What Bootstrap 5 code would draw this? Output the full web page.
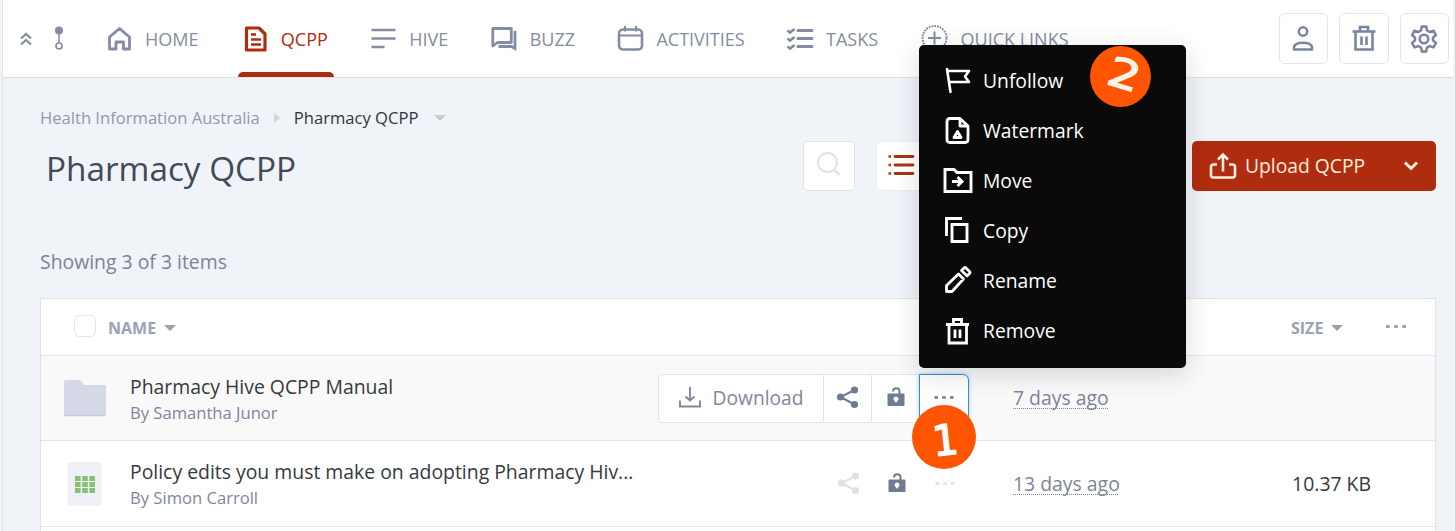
<!DOCTYPE html>
<html lang="en">
<head>
  <meta charset="UTF-8" />
  <meta name="viewport" content="width=device-width, initial-scale=1" />
  <title>Pharmacy QCPP</title>
  <link href="https://cdn.jsdelivr.net/npm/bootstrap@5.3.2/dist/css/bootstrap.min.css" rel="stylesheet" />
  <style>
    body {
      font-family: "Open Sans", "Noto Sans", sans-serif;
      font-size: 19.4px;
      line-height: 26px;
      color: #343a40;
      background: #f0f3f8;
      overflow: hidden;
      height: 531px;
    }
    svg { display: block; flex: none; fill: none; stroke: currentColor; stroke-width: 2; overflow: visible; }
    .page-frame { height: 531px; margin-right: 2px; border-left: 1px solid #dfe3ea; margin-left: 2px; }

    /* top bar */
    .top-bar { height: 78px; background: #fff; border-bottom: 1px solid #dde1e7; color: #848ca3; padding: 0 4px 0 16px; }
    .path-dots { margin-left: 20px; }
    .main-tabs { gap: 30.4px; font-size: 18px; margin-left: 36px; }
    .main-tabs .nav-link { position: relative; height: 77px; padding: 0 6px; color: inherit; gap: 13px; white-space: nowrap; }
    .main-tabs .home { padding-right: 9px; }
    .main-tabs .nav-link.active { color: #b02c0e; }
    .main-tabs .nav-link.active::after {
      content: ""; position: absolute; left: 0; right: 0; bottom: 0; height: 5px;
      background: #ac2c12; border-radius: 5px 5px 0 0;
    }
    .tools { gap: 11px; }
    .tool-btn { width: 49.5px; height: 51px; padding: 0; color: #7a84a0; background: #fff; border: 1px solid #e2e5ec; border-radius: 6px; }

    /* heading */
    .content-area { padding: 0 17px 0 37px; }
    .crumbs { height: 26px; margin-top: 27px; font-size: 16.6px; color: #9399ae; }
    .crumbs .current { color: #30363d; }
    .tri { width: 0; height: 0; border: 5px solid transparent; }
    .tri-right { border-left: 6px solid #d0d4de; border-right: 0; margin: 0 14px; }
    .tri-down { border-top: 6px solid #9aa1ad; border-bottom: 0; border-left-width: 6px; border-right-width: 6px; }
    .title-row { height: 50px; margin-top: 10px; }
    .title-row h1 { font-size: 33.3px; line-height: 50px; font-weight: 400; color: #414a58; padding-left: 6px; margin-top: 3px; }
    .white-btn { width: 52px; height: 50px; padding: 0; background: #fff; border: 1px solid #dfe2e8; border-radius: 5px; color: #e2e4e7; }
    .view-btn { width: 110px; border-color: #e8ebf0; color: #a93416; margin-left: 21px; padding-left: 11px; }
    .upload-btn { width: 244px; height: 50px; margin-left: 206px; padding: 0 17px; background: #b02c0e; color: #fff0df; border: 0; border-radius: 5px; font-size: 19.3px; }
    .upload-btn span { margin-left: 9px; }
    .count-line { margin-top: 58px; height: 26px; color: #7c8296; }

    /* file list */
    .file-list { margin-top: 23px; border: 1px solid #dfe3e8; border-bottom: 0; background: #fff; }
    .list-head { height: 57px; border-bottom: 1px solid #e1e4e8; font-size: 16px; font-weight: 700; color: #99a2b3; padding-top: 1px; }
    .file-row { height: 86px; border-bottom: 1px solid #e3e5e9; }
    .file-row.hovered { height: 85px; background: #f9f9fa; }
    .file-row.cut-off { height: 4px; border: 0; }
    .col-icon { width: 89px; padding-left: 22px; }
    .col-name { width: 528px; padding-top: 1px; }
    .col-act { width: 355px; }
    .check-box { width: 22px; height: 22px; border: 1px solid #e3e5e8; border-radius: 5px; margin: 0 12px 4px 33px; }
    .head-size { width: 144px; }
    .head-dots { margin-left: 42px; margin-bottom: 2px; }
    .file-name { line-height: 28px; }
    .by-line { font-size: 16.6px; line-height: 24px; color: #7f869a; }
    .when { color: #7d8498; text-decoration: underline dotted 1px; text-underline-offset: 3px; text-decoration-skip-ink: none; }

    .actions { position: relative; width: 311px; height: 49px; color: #6f7a94; }
    .actions > .btn { height: 49px; padding: 0; color: inherit; background: #fff; border: 1px solid #e0e2e6; border-radius: 0; flex: none; }
    .actions > .btn + .btn { border-left-width: 0; }
    .actions > .download { width: 166px; border-radius: 4px 0 0 4px; gap: 12px; font-size: 19.2px; color: #80879b; }
    .actions .sq { width: 48px; }
    .actions > .more { width: 50px; border: 1px solid #3e8cc9 !important; border-radius: 0 6px 6px 0; box-shadow: 0 0 4px #a8d0f0; margin-left: -1px; }
    .actions.plain > .btn { background: none; border-color: transparent; }
    .actions.plain > .faded { color: #dfe1e5; }

    .row-menu {
      position: absolute; left: 261px; bottom: 55px; z-index: 5; width: 267px; height: 323px; padding: 11px 0 0;
      background: #0a0a0a; border: 0; border-radius: 5px; box-shadow: 0 6px 26px rgba(20, 25, 35, .16);
    }
    .row-menu .dropdown-item { height: 50.1px; padding: 0 0 0 25px; gap: 12px; color: #fff; font-size: 19.3px; }
    .row-menu svg { width: 27px; height: 27px; stroke-width: 2.6; }
    .step { position: absolute; z-index: 6; border-radius: 50%; background: #ff5500; color: #fff; font-family: "DejaVu Sans Mono", monospace; }
    .step-one { width: 64px; height: 64px; left: 254px; top: 31px; font-size: 42px; }
    .step-two { width: 61px; height: 61px; left: 171px; top: 1px; font-size: 51px; font-family: "DejaVu Sans", sans-serif; color: #fff4e6; }
    .step-one span { transform: translate(1px, 4px) rotate(-6deg); -webkit-text-stroke: 1.6px; }
    .step-two span { transform: translate(4px, -1px) rotate(17deg) scaleY(.8); -webkit-text-stroke: 1.6px; }
  </style>
</head>
<body>

<div class="page-frame">
  <header class="top-bar d-flex align-items-center">
    <svg width="14" height="16" viewBox="0 0 14 16"><path d="M2 7.500l5-4.500 5 4.500M2 13.500L7 9l5 4.500" stroke-width="2.200"/></svg>
    <svg class="path-dots" width="12" height="26" viewBox="0 0 12 26"><circle cx="6" cy="4.500" r="4" fill="currentColor" stroke="none"/><path d="M6 8v9" stroke-width="1.500"/><circle cx="6" cy="20" r="3" stroke-width="1.700"/></svg>

    <nav class="nav main-tabs flex-nowrap">
      <a class="nav-link home d-flex align-items-center" href="#">
        <svg width="25" height="26" viewBox="0 0 25 26"><path d="M2.500 23V11L12.500 2.500 22.500 11v12h-6v-7H9v7z" stroke-width="2.800" stroke-linejoin="round"/></svg>
        <span>HOME</span>
      </a>
      <a class="nav-link d-flex align-items-center active" href="#">
        <svg width="24" height="26" viewBox="0 0 24 26"><path d="M2.500 2H15l6 6v16H2.500z" stroke-width="3.200" stroke-linejoin="round"/><path d="M7 8.500h5M7 13.500h10M7 18.500h10" stroke-width="2.300"/></svg>
        <span>QCPP</span>
      </a>
      <a class="nav-link d-flex align-items-center" href="#">
        <svg width="26" height="22" viewBox="0 0 26 22"><path d="M1.500 2h24M1.500 10.500h24M1.500 19h13" stroke-width="2.700"/></svg>
        <span>HIVE</span>
      </a>
      <a class="nav-link d-flex align-items-center" href="#">
        <svg width="26" height="26" viewBox="0 0 26 26"><path d="M1.800 2.500h18.500v14H6.500l-4.700 3.500z" stroke-width="2.800" stroke-linejoin="round"/><path d="M24 5v17.500l-3.500-2H7.500" stroke-width="2.800"/></svg>
        <span>BUZZ</span>
      </a>
      <a class="nav-link d-flex align-items-center" href="#">
        <svg width="26" height="26" viewBox="0 0 26 26"><rect x="2" y="3.500" width="23" height="20" rx="4" stroke-width="2.600"/><path d="M2 9.500h23M8 0v5.500M19 0v5.500" stroke-width="2.200"/></svg>
        <span>ACTIVITIES</span>
      </a>
      <a class="nav-link d-flex align-items-center" href="#">
        <svg width="26" height="22" viewBox="0 0 26 22"><path d="M11 2.500h14M11 10.500h14M11 18.500h14" stroke-width="3" stroke-linecap="round"/><path d="M.500 2.500l2.500 2L7.500 1M.500 10.500l2.500 2L7.500 9M.500 18.500l2.500 2 4.500-3.500" stroke-width="2.700"/></svg>
        <span>TASKS</span>
      </a>
      <a class="nav-link d-flex align-items-center" href="#">
        <svg width="27" height="27" viewBox="0 0 27 27"><circle cx="13.500" cy="13" r="12" stroke-dasharray="1.800 1"/><path d="M13.500 6.500v13M7 13h13"/></svg>
        <span>QUICK LINKS</span>
      </a>
    </nav>

    <div class="d-flex ms-auto tools">
      <button class="btn tool-btn d-flex align-items-center justify-content-center" type="button">
        <svg width="24" height="26" viewBox="0 0 24 26"><circle cx="12" cy="5.500" r="4.200" stroke-width="2.500"/><path d="M3 23.500v-2c0-6.500 18-6.500 18 0v2z" stroke-width="2.500" stroke-linejoin="round"/></svg>
      </button>
      <button class="btn tool-btn d-flex align-items-center justify-content-center" type="button">
        <svg width="24" height="26" viewBox="0 0 24 26"><path d="M.500 5.500h23M3.500 6v17.500h17V6M8 5V1h8v4M9.500 10.500V19M14.500 10.500V19" stroke-width="2.600"/></svg>
      </button>
      <button class="btn tool-btn d-flex align-items-center justify-content-center" type="button">
        <svg width="28" height="28" viewBox="0 0 28 28"><circle cx="14" cy="14" r="4.300" stroke-width="2.500"/><path d="M11.800 1.500h4.400l.8 4 2.600 1.500 3.900-1.400 2.500 4.400-3 2.600v2.800l3 2.600-2.500 4.400-3.900-1.400-2.600 1.500-.8 4h-4.400l-.8-4L8.400 21l-3.900 1.400L2 18l3-2.600v-2.800L2 10l2.500-4.400L8.400 7 11 5.500z" stroke-width="2.500" stroke-linejoin="round"/></svg>
      </button>
    </div>
  </header>

  <main class="content-area">
    <div class="crumbs d-flex align-items-center">
      <span>Health Information Australia</span>
      <span class="tri tri-right"></span>
      <span class="current">Pharmacy QCPP</span>
      <span class="tri tri-down opacity-50 ms-3"></span>
    </div>

    <div class="title-row d-flex align-items-center">
      <h1 class="mb-0 me-auto">Pharmacy QCPP</h1>
      <button class="btn white-btn d-flex align-items-center justify-content-center" type="button">
        <svg width="26" height="26" viewBox="0 0 26 26"><circle cx="11.500" cy="9.500" r="9.500" stroke-width="2.300"/><path d="M18 16.500l5.500 5.500" stroke-width="2.500"/></svg>
      </button>
      <button class="btn white-btn view-btn d-flex align-items-center" type="button">
        <svg width="26" height="22" viewBox="0 0 26 22"><path d="M7 1.500h18M7 10h18M7 18.500h18" stroke-width="2.900" stroke-linecap="round"/><path d="M.500 1.500h2.500M.500 10h2.500M.500 18.500h2.500" stroke-width="2.600"/></svg>
      </button>
      <button class="btn upload-btn d-flex align-items-center" type="button">
        <svg width="27" height="27" viewBox="0 0 27 27"><path d="M8 11.500H4.500q-2.500 0-2.500 2.500v8q0 2.500 2.500 2.500h19q2.500 0 2.500-2.500v-8q0-2.500-2.500-2.500H20M14 18.500V3M9 6.500l5-5 5 5" stroke-width="2.600"/></svg>
        <span>Upload QCPP</span>
        <svg class="ms-auto" width="16" height="10" viewBox="0 0 16 10"><path d="M2 1.500l6 6 6-6" stroke-width="3"/></svg>
      </button>
    </div>

    <div class="count-line">Showing 3 of 3 items</div>

    <section class="file-list">
      <div class="list-head d-flex align-items-center">
        <div class="check-box"></div>
        <span>NAME</span><span class="tri tri-down ms-2"></span>
        <div class="d-flex align-items-center ms-auto head-size">
          <span>SIZE</span><span class="tri tri-down ms-2"></span>
          <svg class="head-dots" width="22" height="6" viewBox="0 0 22 6"><path d="M1 2.500h3.500M9.200 2.500h3.500M17.500 2.500H21" stroke-width="3"/></svg>
        </div>
      </div>

      <div class="file-row hovered d-flex align-items-center">
        <div class="col-icon">
          <svg width="44" height="38" viewBox="0 0 44 38"><path d="M1 3q0-2 2-2h14l4 5h20q2 0 2 2v29H1z" fill="#d4d8e7" stroke="none"/><path d="M1 36.500h42" stroke="#c5cbd9" stroke-width="1.500"/></svg>
        </div>
        <div class="col-name">
          <div class="file-name">Pharmacy Hive QCPP Manual</div>
          <div class="by-line">By Samantha Junor</div>
        </div>
        <div class="col-act">
          <div class="actions d-flex">
            <button class="btn download d-flex align-items-center justify-content-center" type="button">
              <svg width="22" height="22" viewBox="0 0 22 22"><path d="M1 13.500V19.500h20v-6M11 0v13.500M6.500 9.500L11 13.500l4.500-4" stroke-width="1.900"/></svg>
              <span>Download</span>
            </button>
            <button class="btn sq d-flex align-items-center justify-content-center" type="button">
              <svg width="22" height="22" viewBox="0 0 22 22"><path d="M17.500 3L3.500 10l14 7.500"/><g fill="currentColor" stroke="none"><circle cx="17.500" cy="3" r="3.600"/><circle cx="3.500" cy="10" r="3.600"/><circle cx="17.500" cy="17.500" r="3.600"/></g></svg>
            </button>
            <button class="btn sq d-flex align-items-center justify-content-center" type="button">
              <svg width="18" height="20" viewBox="0 0 18 20"><path d="M1.500 5.500h15q1 0 1 1V17q0 1-1 1h-15q-1 0-1-1V6.500q0-1 1-1z" fill="currentColor" stroke="none"/><path d="M6 3.500c0-4.500 6.500-4.500 6.500 0V7"/><path d="M9 15c-1-2-2.500-2.500-2.500-4a2.500 2.500 0 0 1 5 0c0 1.500-1.500 2-2.500 4z" fill="#fff" stroke="none"/></svg>
            </button>
            <button class="btn more d-flex align-items-center justify-content-center" type="button">
              <svg width="20" height="6" viewBox="0 0 20 6"><path d="M.500 2.500H4M8.200 2.500h3.500M16 2.500h3.500" stroke-width="2.600"/></svg>
            </button>

            <div class="dropdown-menu row-menu d-block">
              <a class="dropdown-item d-flex align-items-center" href="#">
                <svg viewBox="0 0 27 27"><path d="M3 2l3.500 23M3.500 4H25l-4 5.500 4 5.500H5" stroke-linejoin="round" stroke-linecap="round"/></svg>
                <span>Unfollow</span>
              </a>
              <a class="dropdown-item d-flex align-items-center" href="#">
                <svg viewBox="0 0 27 27"><path d="M16 1.500H6Q3 1.500 3 4.500v18q0 3 3 3h15q3 0 3-3V9zM16 1.500V9h8M13.500 14.500l3.500 6h-7z" stroke-width="2.800" stroke-linejoin="round"/></svg>
                <span>Watermark</span>
              </a>
              <a class="dropdown-item d-flex align-items-center" href="#">
                <svg viewBox="0 0 27 27"><path d="M1 2.500h9l3 3h14v19H1zM8 14.500h10M13.500 10l4.500 4.500-4.500 4.500" stroke-width="2.900"/></svg>
                <span>Move</span>
              </a>
              <a class="dropdown-item d-flex align-items-center" href="#">
                <svg viewBox="0 0 27 27"><path d="M2.500 19V1.500H18M8 7.500h15v17H8z" stroke-width="2.900"/></svg>
                <span>Copy</span>
              </a>
              <a class="dropdown-item d-flex align-items-center" href="#">
                <svg viewBox="0 0 27 27"><path d="M2.500 24.500v-6L14.500 7l5 5L8 24.500zM17.500 3.500L20 1q1-1 2 0l3.500 3.500q1 1 0 2L23 9z" stroke-width="2.800" stroke-linejoin="round"/></svg>
                <span>Rename</span>
              </a>
              <a class="dropdown-item d-flex align-items-center" href="#">
                <svg viewBox="0 0 27 27"><path d="M2 6.500h23M5 6.500V25h17.500V6.500M9.500 5.500v-4h8v4M11 11.500V20M16 11.500V20" stroke-width="2.800"/></svg>
                <span>Remove</span>
              </a>
              <div class="step step-two d-flex align-items-center justify-content-center"><span>2</span></div>
            </div>
            <div class="step step-one d-flex align-items-center justify-content-center"><span>1</span></div>
          </div>
        </div>
        <div><span class="when">7 days ago</span></div>
      </div>

      <div class="file-row d-flex align-items-center">
        <div class="col-icon">
          <svg width="44" height="44" viewBox="0 0 44 44"><path d="M5 1h33v42H5z" fill="#eff1f6" stroke="#e9ecf2" stroke-width="1"/><path d="M12 16.500h20M12 22.500h20M12 28.500h20" stroke="#84c170" stroke-width="5" stroke-dasharray="5.600 1.600"/></svg>
        </div>
        <div class="col-name">
          <div class="file-name">Policy edits you must make on adopting Pharmacy Hiv...</div>
          <div class="by-line">By Simon Carroll</div>
        </div>
        <div class="col-act">
          <div class="actions plain d-flex justify-content-end">
            <div class="btn sq faded d-flex align-items-center justify-content-center">
              <svg width="22" height="22" viewBox="0 0 22 22"><path d="M17.500 3L3.500 10l14 7.500"/><g fill="currentColor" stroke="none"><circle cx="17.500" cy="3" r="3.600"/><circle cx="3.500" cy="10" r="3.600"/><circle cx="17.500" cy="17.500" r="3.600"/></g></svg>
            </div>
            <div class="btn sq d-flex align-items-center justify-content-center">
              <svg width="18" height="20" viewBox="0 0 18 20"><path d="M1.500 5.500h15q1 0 1 1V17q0 1-1 1h-15q-1 0-1-1V6.500q0-1 1-1z" fill="currentColor" stroke="none"/><path d="M6 3.500c0-4.500 6.500-4.500 6.500 0V7"/><path d="M9 15c-1-2-2.500-2.500-2.500-4a2.500 2.500 0 0 1 5 0c0 1.500-1.500 2-2.500 4z" fill="#fff" stroke="none"/></svg>
            </div>
            <div class="btn sq faded d-flex align-items-center justify-content-center">
              <svg width="20" height="6" viewBox="0 0 20 6"><path d="M.500 2.500H4M8.200 2.500h3.500M16 2.500h3.500" stroke-width="2.600"/></svg>
            </div>
          </div>
        </div>
        <div><span class="when">13 days ago</span></div>
        <div class="ms-auto me-5 pe-3">10.37 KB</div>
      </div>
      <div class="file-row cut-off"></div>
    </section>
  </main>
</div>

<script src="https://cdn.jsdelivr.net/npm/bootstrap@5.3.2/dist/js/bootstrap.bundle.min.js"></script>
</body>
</html>
